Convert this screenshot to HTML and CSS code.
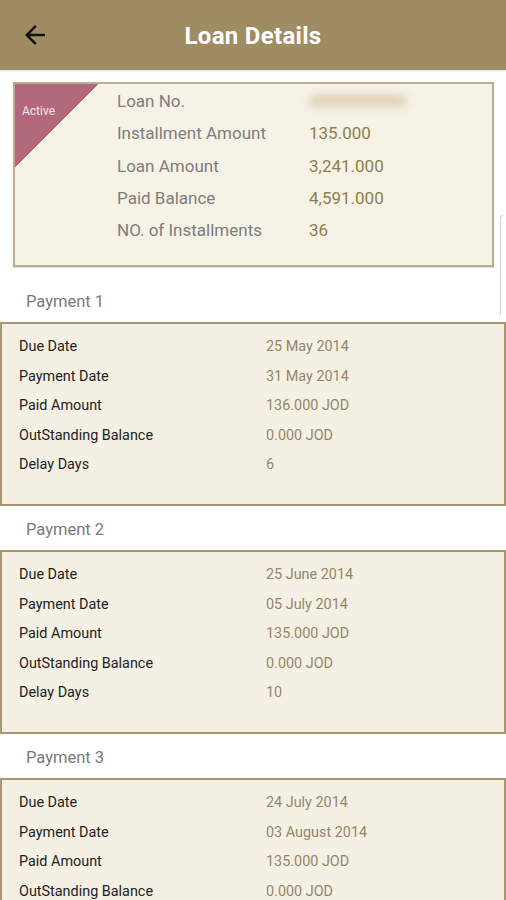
FILE: index.html
```html
<!DOCTYPE html>
<html lang="en">
<head>
    <meta charset="UTF-8">
    <meta name="viewport" content="width=device-width, initial-scale=1.0">
    <title>Loan Details</title>
    <link rel="stylesheet" href="styles.css">
</head>
<body>
    <header class="topbar">
        <svg class="back" width="30" height="30" viewBox="0 0 24 24">
            <path d="M20 11H7.83l5.59-5.59L12 4l-8 8 8 8 1.41-1.41L7.83 13H20v-2z" fill="#111"/>
        </svg>
        <h1>Loan Details</h1>
    </header>

    <main>
        <div class="loan-card">
            <div class="ribbon"><span>Active</span></div>
            <div class="loan-grid">
                <span class="label">Loan No.</span><span class="value"><i class="masked"></i></span>
                <span class="label">Installment Amount</span><span class="value">135.000</span>
                <span class="label">Loan Amount</span><span class="value">3,241.000</span>
                <span class="label">Paid Balance</span><span class="value">4,591.000</span>
                <span class="label">NO. of Installments</span><span class="value">36</span>
            </div>
        </div>

        <h2 class="pay-title">Payment 1</h2>
        <div class="pay-card">
            <span>Due Date</span><span class="val">25 May 2014</span>
            <span>Payment Date</span><span class="val">31 May 2014</span>
            <span>Paid Amount</span><span class="val">136.000 JOD</span>
            <span>OutStanding Balance</span><span class="val">0.000 JOD</span>
            <span>Delay Days</span><span class="val">6</span>
        </div>

        <h2 class="pay-title">Payment 2</h2>
        <div class="pay-card">
            <span>Due Date</span><span class="val">25 June 2014</span>
            <span>Payment Date</span><span class="val">05 July 2014</span>
            <span>Paid Amount</span><span class="val">135.000 JOD</span>
            <span>OutStanding Balance</span><span class="val">0.000 JOD</span>
            <span>Delay Days</span><span class="val">10</span>
        </div>

        <h2 class="pay-title">Payment 3</h2>
        <div class="pay-card">
            <span>Due Date</span><span class="val">24 July 2014</span>
            <span>Payment Date</span><span class="val">03 August 2014</span>
            <span>Paid Amount</span><span class="val">135.000 JOD</span>
            <span>OutStanding Balance</span><span class="val">0.000 JOD</span>
            <span>Delay Days</span><span class="val">10</span>
        </div>

        <div class="scroll-hint"></div>
    </main>
</body>
</html>
```

FILE: styles.css
```css
* {
    margin: 0;
    padding: 0;
    box-sizing: border-box;
    font-family: Roboto, "Liberation Sans", sans-serif;
}

body {
    background-color: white;
    width: 506px;
    overflow-x: hidden;
}

.topbar {
    height: 70px;
    background-color: #a08c62;
    display: flex;
    align-items: center;
    position: relative;
    box-shadow: 0 1px 2px rgba(0, 0, 0, 0.15);
}

.back {
    position: absolute;
    left: 20px;
    top: 20px;
}

.topbar h1 {
    flex: 1;
    text-align: center;
    color: white;
    font-size: 24px;
    font-weight: 700;
    letter-spacing: 0.3px;
    padding-top: 2px;
}

main {
    position: relative;
}

.loan-card {
    position: relative;
    margin: 12px 12px 0 13px;
    background-color: #f6f2e6;
    border: 2px solid #b8ae90;
    box-shadow: 0 1px 1px rgba(0, 0, 0, 0.12);
    height: 185px;
    padding: 1px 0 0 102px;
}

.ribbon {
    position: absolute;
    left: 0;
    top: 0;
    width: 84px;
    height: 84px;
    background: linear-gradient(to bottom right, #b0687a 50%, transparent 50%);
}

.ribbon span {
    position: absolute;
    left: 7px;
    top: 20px;
    color: #f5e8ea;
    font-size: 12px;
}

.loan-grid {
    display: grid;
    grid-template-columns: 192px 1fr;
    grid-auto-rows: 32.25px;
    align-items: center;
    font-size: 17px;
}

.label {
    color: #7d7d7d;
}

.value {
    color: #8d7f4a;
}

.masked {
    display: block;
    width: 98px;
    height: 12px;
    background-color: #ddd2b4;
    border-radius: 6px;
    filter: blur(4px);
}

.pay-title {
    font-size: 16.5px;
    font-weight: 400;
    color: #7a7a7a;
    height: 44px;
    line-height: 41px;
    padding: 3px 0 0 26px;
}

.loan-card + .pay-title {
    margin-top: 11px;
}

.pay-card {
    display: grid;
    grid-template-columns: 247px 1fr;
    grid-auto-rows: 29.5px;
    align-items: center;
    height: 184px;
    padding: 8px 0 0 17px;
    background-color: #f5f0e4;
    border: 2px solid #a8976c;
    font-size: 14.4px;
    color: #222;
}

.pay-card .val {
    color: #938766;
}

.scroll-hint {
    position: absolute;
    right: 3px;
    top: 133px;
    width: 3px;
    height: 100px;
    border-left: 1px solid #d4d4d4;
    border-top: 1px solid #d4d4d4;
    border-radius: 3px 0 0 0;
}
```
